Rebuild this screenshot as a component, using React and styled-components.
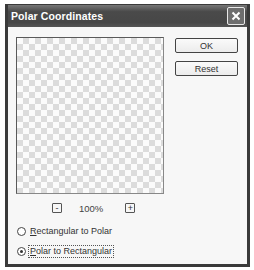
import React from "react";
import styled, { createGlobalStyle } from "styled-components";

const Global = createGlobalStyle`
  html, body { margin: 0; padding: 0; background: #fff; }
  body { font-family: "Liberation Sans", sans-serif; }
`;

const Window = styled.div`
  margin: 4px 0 0 5px;
  width: 245px;
  height: 263px;
  box-sizing: border-box;
  border: 3px solid #3a3a3a;
  border-top-width: 1px;
  background: #f7f7f7;
  display: flex;
  flex-direction: column;
`;

const TitleBar = styled.div`
  height: 22px;
  background: linear-gradient(#777, #4a4a4a 30%, #474747 80%, #555);
  display: flex;
  align-items: center;
  justify-content: space-between;
  padding: 0 2px 0 3px;
`;

const Title = styled.span`
  color: #fff;
  font-family: "Liberation Sans", sans-serif;
  font-weight: bold;
  font-size: 10.5px;
  letter-spacing: 0.1px;
`;

const CloseButton = styled.div`
  width: 16px;
  height: 16px;
  border: 1px solid #e8e8e8;
  border-radius: 2px;
  background: #6e6e6e;
  display: flex;
  align-items: center;
  justify-content: center;
`;

const Client = styled.div`
  flex: 1;
  display: flex;
  padding: 10px 0 0 8px;
  gap: 11px;
`;

const LeftCol = styled.div`
  display: flex;
  flex-direction: column;
`;

const Preview = styled.div`
  width: 148px;
  height: 157px;
  box-sizing: border-box;
  border: 1px solid #5a5a5a;
  border-right-color: #888;
  border-bottom-color: #888;
  background-color: #fbfbfb;
  background-image:
    linear-gradient(45deg, #dcdcdc 25%, transparent 25%, transparent 75%, #dcdcdc 75%),
    linear-gradient(45deg, #dcdcdc 25%, transparent 25%, transparent 75%, #dcdcdc 75%);
  background-size: 12px 12px;
  background-position: 0 0, 6px 6px;
`;

const ZoomRow = styled.div`
  display: flex;
  align-items: center;
  height: 10px;
  margin-top: 9px;
  padding-left: 36px;
`;

const ZoomButton = styled.div`
  width: 8px;
  height: 8px;
  border: 1px solid #555;
  border-radius: 1px;
  display: flex;
  align-items: center;
  justify-content: center;
  font-family: "Liberation Sans", sans-serif;
  font-size: 9px;
  line-height: 8px;
  color: #333;
`;

const ZoomLabel = styled.span`
  font-family: "Liberation Sans", sans-serif;
  font-size: 9.5px;
  color: #444;
  margin: 0 22px 0 17px;
`;

const RadioRow = styled.label`
  display: flex;
  align-items: center;
  height: 14px;
  margin-top: ${(p) => p.$mt}px;
  font-family: "Liberation Sans", sans-serif;
  font-size: 9px;
  color: #333;
  gap: 2px;
  margin-left: 1px;
`;

const RadioCircle = styled.span`
  width: 7px;
  height: 7px;
  border: 1px solid #444;
  border-radius: 50%;
  background: #fff;
  display: flex;
  align-items: center;
  justify-content: center;
  &::after {
    content: "";
    width: 3px;
    height: 3px;
    border-radius: 50%;
    background: ${(p) => (p.$checked ? "#333" : "transparent")};
  }
`;

const RadioText = styled.span`
  padding: 0 1px;
  border: 1px dotted ${(p) => (p.$focus ? "#555" : "transparent")};
  line-height: 11px;
`;

const U = styled.span`
  text-decoration: underline;
`;

const RightCol = styled.div`
  display: flex;
  flex-direction: column;
  gap: 8px;
  padding-top: 1px;
`;

const Button = styled.div`
  width: 63px;
  height: 15px;
  box-sizing: border-box;
  border: 1px solid #444;
  border-radius: 2px;
  background: linear-gradient(#fafafa, #ececec);
  display: flex;
  align-items: center;
  justify-content: center;
  font-family: "Liberation Sans", sans-serif;
  font-size: 9px;
  color: #333;
`;

export default function App() {
  return (
    <>
      <Global />
      <Window>
        <TitleBar>
          <Title>Polar Coordinates</Title>
          <CloseButton>
            <svg width="10" height="10" viewBox="0 0 10 10">
              <path d="M1.5 1.5 L8.5 8.5 M8.5 1.5 L1.5 8.5" stroke="#fff" strokeWidth="2" />
            </svg>
          </CloseButton>
        </TitleBar>
        <Client>
          <LeftCol>
            <Preview />
            <ZoomRow>
              <ZoomButton>-</ZoomButton>
              <ZoomLabel>100%</ZoomLabel>
              <ZoomButton>+</ZoomButton>
            </ZoomRow>
            <RadioRow $mt={11}>
              <RadioCircle />
              <RadioText>
                <U>R</U>ectangular to Polar
              </RadioText>
            </RadioRow>
            <RadioRow $mt={6}>
              <RadioCircle $checked />
              <RadioText $focus>
                <U>P</U>olar to Rectangular
              </RadioText>
            </RadioRow>
          </LeftCol>
          <RightCol>
            <Button>OK</Button>
            <Button>Reset</Button>
          </RightCol>
        </Client>
      </Window>
    </>
  );
}
